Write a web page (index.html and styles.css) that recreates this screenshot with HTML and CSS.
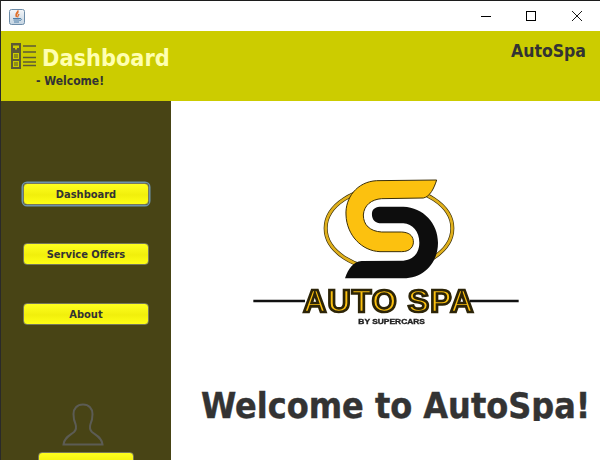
FILE: index.html
```html
<!DOCTYPE html>
<html>

<head>
    <meta charset="utf-8">
    <title>AutoSpa</title>
    <link rel="stylesheet" href="styles.css">
</head>

<body>
    <div class="Window">
        <div class="TitleBar">
            <svg class="JavaIcon" width="16" height="16" viewBox="0 0 16 16">
                <defs>
                    <linearGradient id="javaBg" x1="0" y1="0" x2="0" y2="1">
                        <stop offset="0" stop-color="#f4f6f8" />
                        <stop offset="1" stop-color="#c4d4e2" />
                    </linearGradient>
                </defs>
                <rect x="0.500" y="0.500" width="15" height="15" rx="2" fill="url(#javaBg)" stroke="#6d8ca8" />
                <path d="M9 2 C10 4 6 5 7.500 8 C6 6 7 4.500 9 2Z M10 5 C9.500 6.500 8 7 9 8.500" fill="none" stroke="#e0702a" stroke-width="1.300" />
                <path d="M4 9.500 H11 M4.500 11 H10.500 M5 13 H10 M11 9.500 C13 9.500 13 11.500 10.500 11.500" fill="none" stroke="#4f7ea8" stroke-width="1" />
            </svg>
            <div class="WinControls">
                <div class="WinBtn">
                    <svg width="10" height="10" viewBox="0 0 10 10"><path d="M0 5.500 H10" stroke="#000" /></svg>
                </div>
                <div class="WinBtn">
                    <svg width="10" height="10" viewBox="0 0 10 10"><rect x="0.500" y="0.500" width="9" height="9" fill="none" stroke="#000" /></svg>
                </div>
                <div class="WinBtn">
                    <svg width="10" height="10" viewBox="0 0 10 10"><path d="M0 0 L10 10 M10 0 L0 10" stroke="#000" stroke-width="0.900" /></svg>
                </div>
            </div>
        </div>

        <header class="Header">
            <svg class="HeaderIcon" width="25" height="26" viewBox="0 0 25 26">
                <rect width="10" height="26" fill="#5c5a36" />
                <path d="M2 2.500 H8 V5 H6 V6.500 H4 V5 H2Z" fill="#cccc00" />
                <rect x="2.500" y="10.500" width="5" height="5" fill="#8f8f18" stroke="#cccc00" />
                <rect x="2.500" y="18.500" width="5" height="5" fill="#8f8f18" stroke="#cccc00" />
                <path d="M12 3 H25 M12 9 H25 M12 14.500 H25 M12 19 H25 M12 22.500 H25" stroke="#5c5a36" stroke-width="1.600" />
            </svg>
            <div class="HeaderTitles">
                <div class="HeaderTitle">Dashboard</div>
                <div class="HeaderSub">- Welcome!</div>
            </div>
            <div class="Brand">AutoSpa</div>
        </header>

        <main class="Main">
            <nav class="Sidebar">
                <button class="NavBtn NavBtn--focus">Dashboard</button>
                <button class="NavBtn">Service Offers</button>
                <button class="NavBtn">About</button>
                <svg class="UserIcon" width="42" height="44" viewBox="0 0 42 44">
                    <path d="M21 1.500 C15 1.500 11.500 5.500 11.500 11 C11.500 15 12 18 13.500 21 C14.500 24 14 27 12 29 C8 32.500 2.500 34 1.500 41.500 H40.500 C39.500 34 34 32.500 30 29 C28 27 27.500 24 28.500 21 C30 18 30.500 15 30.500 11 C30.500 5.500 27 1.500 21 1.500Z" fill="none" stroke="#5c5c54" stroke-width="2" />
                </svg>
                <button class="NavBtn NavBtn--login"></button>
            </nav>

            <section class="Content">
                <svg class="Logo" width="290" height="160" viewBox="0 0 870 480">
                    <ellipse cx="447" cy="175" rx="190" ry="124" fill="#fff" stroke="#3a2f0a" stroke-width="12" />
                    <ellipse cx="447" cy="175" rx="190" ry="124" fill="none" stroke="#e0b01c" stroke-width="8" />
                    <path d="M590 30 L410 32 C350 35 315 85 318 135 C320 195 365 243 420 245 L485 245 C510 245 522 230 520 212 C518 195 505 187 485 186 L425 186 C390 184 370 165 370 135 C372 105 395 88 425 86 L550 84 C570 80 582 55 590 30Z" fill="#fcc10f" stroke="#3a2e08" stroke-width="3" />
                    <path d="M396 128 C398 115 408 110 425 110 L490 110 C550 112 594 160 594 218 C594 280 550 325 490 325 L315 325 C325 295 340 275 365 273 L490 272 C520 270 538 248 538 218 C538 185 518 162 490 160 L425 160 C405 160 394 148 396 128Z" fill="#0d0d0d" />
                    <path d="M40 393 H195 M690 393 H836" stroke="#111" stroke-width="7" />
                    <text class="LogoName" x="190" y="426" textLength="510" lengthAdjust="spacing">AUTO SPA</text>
                    <text class="LogoBy" x="355" y="463" textLength="200" lengthAdjust="spacingAndGlyphs">BY SUPERCARS</text>
                </svg>
                <h1 class="Welcome">Welcome to AutoSpa!</h1>
            </section>
        </main>
    </div>
</body>

</html>
```

FILE: styles.css
```css
* {
    box-sizing: border-box;
    padding: 0;
    margin: 0;
}

body {
    background-color: #fff;
    font-family: "DejaVu Sans Condensed", "DejaVu Sans", sans-serif;
    font-weight: 700;
    color: #333;
}

.Window {
    width: 600px;
    height: 460px;
    display: flex;
    flex-direction: column;
    overflow: hidden;
    border-top: 1px solid #1c1c1c;
    border-left: 1px solid #2a2a2a;
}

.TitleBar {
    height: 30px;
    flex: none;
    display: flex;
    align-items: center;
    justify-content: space-between;
    padding-left: 8px;
    background-color: #fff;
}

.JavaIcon {
    margin-top: 1px;
}

.WinControls {
    display: flex;
}

.WinBtn {
    width: 46px;
    height: 30px;
    display: flex;
    align-items: center;
    justify-content: center;
}

.WinBtn:first-child {
    width: 44px;
}

.Header {
    height: 70px;
    flex: none;
    display: flex;
    align-items: flex-start;
    padding: 12px 14px 0 10px;
    background-color: #cccc00;
}

.HeaderIcon {
    flex: none;
}

.HeaderTitles {
    margin-left: 6px;
}

.HeaderTitle {
    font-size: 23.300px;
    line-height: 29px;
    color: #ffffb0;
}

.HeaderSub {
    font-size: 12px;
    line-height: 15px;
    margin: 2px 0 0 -6px;
}

.Brand {
    margin: -3px 0 0 auto;
    font-size: 17.500px;
    line-height: 22px;
}

.Main {
    flex: 1;
    display: flex;
    min-height: 0;
}

.Sidebar {
    width: 170px;
    flex: none;
    display: flex;
    flex-direction: column;
    align-items: center;
    padding-top: 82px;
    background-color: #484415;
}

.NavBtn {
    width: 126px;
    height: 22px;
    flex: none;
    margin-bottom: 38px;
    font-family: inherit;
    font-size: 11px;
    font-weight: 700;
    color: #333;
    border: 1px solid #77785c;
    border-radius: 4px;
    background: linear-gradient(#ffff1e, #f1ef0c 55%, #ffff14);
}

.NavBtn--focus {
    box-shadow: 0 0 0 1.500px #6d93ad;
}

.NavBtn--login {
    width: 96px;
    margin-bottom: 0;
    margin-top: 5px;
}

.UserIcon {
    flex: none;
    margin: 40px 7px 0 0;
}

.Content {
    flex: 1;
    min-width: 0;
    padding-top: 69px;
    background-color: #fff;
}

.Logo {
    display: block;
    margin-left: 69px;
    filter: blur(0.350px);
}

.LogoName {
    font-family: "Liberation Sans", sans-serif;
    font-size: 96px;
    font-weight: 700;
    fill: #fcc10f;
    stroke: #2c2408;
    stroke-width: 8px;
}

.LogoBy {
    font-family: "Liberation Sans", sans-serif;
    font-size: 20px;
    font-weight: 700;
    fill: #222;
    stroke: #222;
    stroke-width: 1px;
}

.Welcome {
    height: 31px;
    margin-top: 60px;
    padding-left: 30px;
    overflow: hidden;
    font-size: 35.600px;
    line-height: 31px;
    white-space: nowrap;
    -webkit-text-stroke: 0.400px #333;
}
```
